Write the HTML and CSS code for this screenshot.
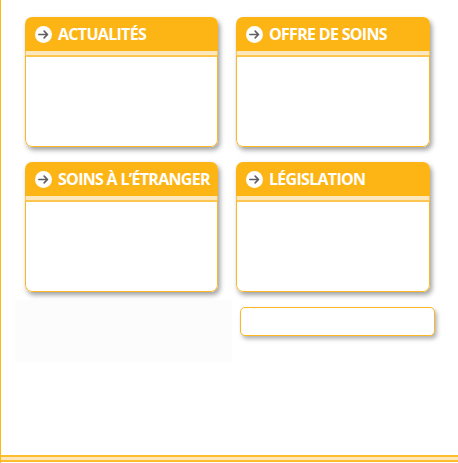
FILE: index.html
```html
<!DOCTYPE html>
<html lang="fr">
<head>
<meta charset="utf-8">
<title>Rubriques</title>
<link rel="stylesheet" href="styles.css">
</head>
<body>
<div class="page">
  <div class="grid">
    <section class="card">
      <div class="card-head">
        <svg class="go" viewBox="0 0 16 16" width="17" height="17"><circle cx="8" cy="8" r="8" fill="#fff"/><path d="M3.6 8H11.8M8.6 4.8L11.8 8L8.6 11.2" fill="none" stroke="#5f5f62" stroke-width="1.5" stroke-linecap="round" stroke-linejoin="round"/></svg>
        <h2 class="card-title">ACTUALITÉS</h2>
      </div>
      <div class="card-stripe"></div>
      <div class="card-body"></div>
    </section>
    <section class="card">
      <div class="card-head">
        <svg class="go" viewBox="0 0 16 16" width="17" height="17"><circle cx="8" cy="8" r="8" fill="#fff"/><path d="M3.6 8H11.8M8.6 4.8L11.8 8L8.6 11.2" fill="none" stroke="#5f5f62" stroke-width="1.5" stroke-linecap="round" stroke-linejoin="round"/></svg>
        <h2 class="card-title">OFFRE DE SOINS</h2>
      </div>
      <div class="card-stripe"></div>
      <div class="card-body"></div>
    </section>
    <section class="card">
      <div class="card-head">
        <svg class="go" viewBox="0 0 16 16" width="17" height="17"><circle cx="8" cy="8" r="8" fill="#fff"/><path d="M3.6 8H11.8M8.6 4.8L11.8 8L8.6 11.2" fill="none" stroke="#5f5f62" stroke-width="1.5" stroke-linecap="round" stroke-linejoin="round"/></svg>
        <h2 class="card-title">SOINS À L’ÉTRANGER</h2>
      </div>
      <div class="card-stripe"></div>
      <div class="card-body"></div>
    </section>
    <section class="card">
      <div class="card-head">
        <svg class="go" viewBox="0 0 16 16" width="17" height="17"><circle cx="8" cy="8" r="8" fill="#fff"/><path d="M3.6 8H11.8M8.6 4.8L11.8 8L8.6 11.2" fill="none" stroke="#5f5f62" stroke-width="1.5" stroke-linecap="round" stroke-linejoin="round"/></svg>
        <h2 class="card-title">LÉGISLATION</h2>
      </div>
      <div class="card-stripe"></div>
      <div class="card-body"></div>
    </section>
    <div class="ghost"></div>
    <div class="mini"></div>
  </div>
  <div class="footer"></div>
</div>
</body>
</html>
```

FILE: styles.css
```css
html, body {
  margin: 0;
  padding: 0;
  background: #ffffff;
}

.page {
  height: 463px;
  box-sizing: border-box;
  border-left: 1px solid #fdb913;
  display: flex;
  flex-direction: column;
  font-family: "Open Sans", "Liberation Sans", sans-serif;
}

.grid {
  display: grid;
  grid-template-columns: 193px 194px;
  grid-template-rows: 130px 130px auto;
  column-gap: 18px;
  row-gap: 15px;
  padding: 17px 0 0 24px;
}

.card {
  display: flex;
  flex-direction: column;
  border-radius: 7px;
  overflow: hidden;
  background: #ffffff;
  box-shadow: 2px 3px 5px rgba(0, 0, 0, 0.38);
}

.card-head {
  height: 34px;
  flex: none;
  display: flex;
  align-items: center;
  padding-left: 10px;
  background: #fdb515;
}

.go {
  flex: none;
  display: block;
}

.card-title {
  margin: 0 0 0 6px;
  font-size: 16px;
  font-weight: 700;
  letter-spacing: -0.7px;
  color: #ffffff;
  white-space: nowrap;
}

.card-stripe {
  height: 4px;
  flex: none;
  background: #fde8bd;
  border-left: 1px solid #fdc44f;
  border-right: 1px solid #fdc44f;
}

.card-body {
  flex: 1;
  border: 1px solid #fbb724;
  border-top: 2px solid #fdc650;
  border-radius: 0 0 7px 7px;
  background: #ffffff;
}

.ghost {
  margin: -7px 0 0 -10px;
  width: 217px;
  height: 62px;
  background: #fcfcfc;
}

.mini {
  margin-left: 4px;
  width: 195px;
  height: 29px;
  box-sizing: border-box;
  border: 1.5px solid #fbb724;
  border-radius: 5px;
  background: #ffffff;
  box-shadow: 2px 3px 4px rgba(0, 0, 0, 0.3);
}

.footer {
  margin-top: auto;
  margin-bottom: 1px;
  height: 3px;
  border-top: 2px solid #fdbd2c;
  border-bottom: 2px solid #fdbd2c;
  background: #fde7b8;
}
```
